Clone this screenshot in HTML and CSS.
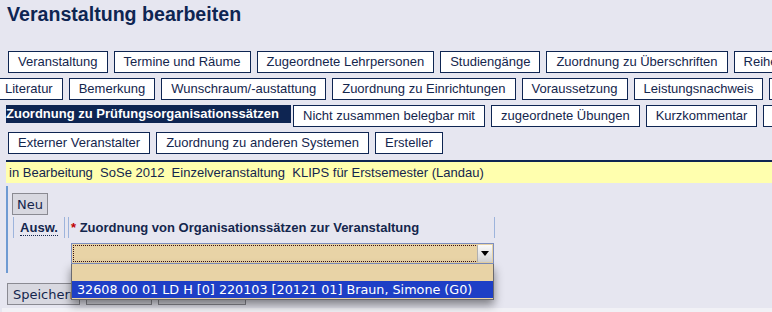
FILE: index.html
```html
<!DOCTYPE html>
<html lang="de">
<head>
<meta charset="UTF-8">
<title>Veranstaltung bearbeiten</title>
<link rel="stylesheet" href="styles.css">
</head>
<body>
<h1 class="page-title">Veranstaltung bearbeiten</h1>
<div class="tabs">
  <div class="tab-row row-1">
    <span class="tab">Veranstaltung</span>
    <span class="tab">Termine und Räume</span>
    <span class="tab">Zugeordnete Lehrpersonen</span>
    <span class="tab">Studiengänge</span>
    <span class="tab">Zuordnung zu Überschriften</span>
    <span class="tab">Reihenfolge</span>
  </div>
  <div class="tab-row row-2">
    <span class="tab">Literatur</span>
    <span class="tab">Bemerkung</span>
    <span class="tab">Wunschraum/-austattung</span>
    <span class="tab">Zuordnung zu Einrichtungen</span>
    <span class="tab">Voraussetzung</span>
    <span class="tab">Leistungsnachweis</span>
    <span class="tab">Lerninhalt</span>
  </div>
  <div class="tab-row row-3">
    <span class="tab active">Zuordnung zu Prüfungsorganisationssätzen</span>
    <span class="tab">Nicht zusammen belegbar mit</span>
    <span class="tab">zugeordnete Übungen</span>
    <span class="tab">Kurzkommentar</span>
    <span class="tab">Zielgruppe</span>
  </div>
  <div class="tab-row row-4">
    <span class="tab">Externer Veranstalter</span>
    <span class="tab">Zuordnung zu anderen Systemen</span>
    <span class="tab">Ersteller</span>
  </div>
</div>
<div class="status">in Bearbeitung&nbsp; SoSe 2012&nbsp; Einzelveranstaltung&nbsp; KLIPS für Erstsemester (Landau)</div>
<div class="edit">
  <button class="btn">Neu</button>
  <div class="head-row">
    <div class="cell cell-sel"><span class="abbr">Ausw.</span></div>
    <div class="cell cell-label"><span class="req">*</span> Zuordnung von Organisationssätzen zur Veranstaltung</div>
  </div>
  <div class="select-wrap">
    <div class="select">
      <span class="select-arrow"><svg width="8" height="5" viewBox="0 0 8 5"><path d="M0 0h8L4 5z" fill="#000"/></svg></span>
    </div>
    <ul class="options">
      <li class="option"></li>
      <li class="option selected">32608 00 01 LD H [0] 220103 [20121 01] Braun, Simone (G0)</li>
    </ul>
  </div>
</div>
<div class="actions">
  <button class="btn btn-save">Speichern</button>
  <button class="btn btn-2" title="Abbrechen"></button>
  <button class="btn btn-3" title="Zurücksetzen"></button>
</div>
<div class="footer"></div>
</body>
</html>
```

FILE: styles.css
```css
body {
  margin: 0;
  background-color: #e6e6f0;
  font-family: "Liberation Sans", Arial, sans-serif;
  font-size: 13px;
  color: #14264d;
  overflow: hidden;
}
.page-title {
  margin: 0;
  padding: 2px 7px 0;
  height: 28px;
  font-size: 19.6px;
  line-height: 24px;
  color: #0e2552;
}
.tabs {
  margin-top: 21px;
}
.tab-row {
  display: flex;
  gap: 6px;
  white-space: nowrap;
  margin-bottom: 5px;
  height: 22px;
}
.row-1 { padding-left: 8px; }
.row-2 { margin-left: -5px; }
.row-3 { padding-left: 6px; }
.row-4 { padding-left: 8px; }
.tab {
  flex: none;
  display: block;
  height: 20px;
  line-height: 20px;
  padding: 0 9px;
  border: 1px solid #0e2552;
  background-color: #fff;
  color: #14264d;
}
.tab.active {
  height: 18px;
  line-height: 18px;
  padding: 0 12px 0 0;
  margin-right: -4px;
  border: none;
  background-color: #0e2552;
  color: #fff;
  font-weight: bold;
}
.status {
  margin: 6px 0 0 6px;
  border-top: 2px solid #0e2552;
  background-color: #ffffae;
  height: 21px;
  line-height: 21px;
  padding-left: 3px;
}
.edit {
  margin: 3px 0 0 6px;
  border-left: 2px solid #6e9ad2;
  padding: 7px 0 9px 4px;
}
.btn {
  display: block;
  height: 22px;
  padding: 0 4px;
  border: 1px solid #8a8a92;
  background-color: #d8d8e0;
  font-family: "DejaVu Sans", Verdana, sans-serif;
  font-size: 13px;
  color: #14264d;
}
.btn-save {
  width: 73px;
  padding: 0 0 0 5px;
  text-align: left;
  white-space: nowrap;
}
.head-row {
  display: flex;
  gap: 3px;
  margin: 2px 0 0 1px;
  height: 21px;
}
.cell {
  border-left: 1px solid #9db4dc;
  border-right: 1px solid #9db4dc;
  line-height: 21px;
  font-weight: bold;
  color: #14264d;
}
.cell-sel {
  width: 50px;
  text-align: center;
}
.abbr {
  border-bottom: 1px dotted #14264d;
}
.cell-label {
  box-sizing: border-box;
  width: 427px;
  padding-left: 2px;
}
.req {
  color: #c00000;
}
.select-wrap {
  position: relative;
  margin: 5px 0 0 59px;
  width: 423px;
}
.select {
  position: relative;
  height: 21px;
  box-sizing: border-box;
  border: 1px solid #7d8fbf;
  outline: 1px dotted #3a1010;
  outline-offset: -3px;
  background-color: #e8d3a6;
}
.select-arrow {
  position: absolute;
  right: 1px;
  top: 1px;
  width: 14px;
  height: 17px;
  background: linear-gradient(#fafafa, #d4d4d4);
  border-left: 1px solid #b0b0b0;
  display: flex;
  align-items: center;
  justify-content: center;
}
.options {
  position: absolute;
  top: 21px;
  left: 0;
  width: 423px;
  margin: 0;
  padding: 0 0 1px;
  list-style: none;
  background-color: #e8d3a6;
  border: 1px solid #6a6a70;
  border-top: none;
  box-sizing: border-box;
  box-shadow: 0 5px 9px rgba(0, 0, 0, 0.45);
  z-index: 2;
}
.option {
  height: 17px;
  line-height: 17px;
  padding-left: 5px;
  font-family: "DejaVu Sans", Verdana, sans-serif;
  font-size: 12.75px;
}
.option.selected {
  background-color: #1e3fc6;
  color: #fff;
}
.actions {
  display: flex;
  align-items: flex-end;
  gap: 6px;
  margin-top: 10px;
  padding-left: 7px;
}
.btn-2 {
  width: 66px;
}
.btn-3 {
  width: 88px;
}
.footer {
  margin: 3px 0 0 2px;
  height: 10px;
  background-color: #f1f1f6;
}
```
